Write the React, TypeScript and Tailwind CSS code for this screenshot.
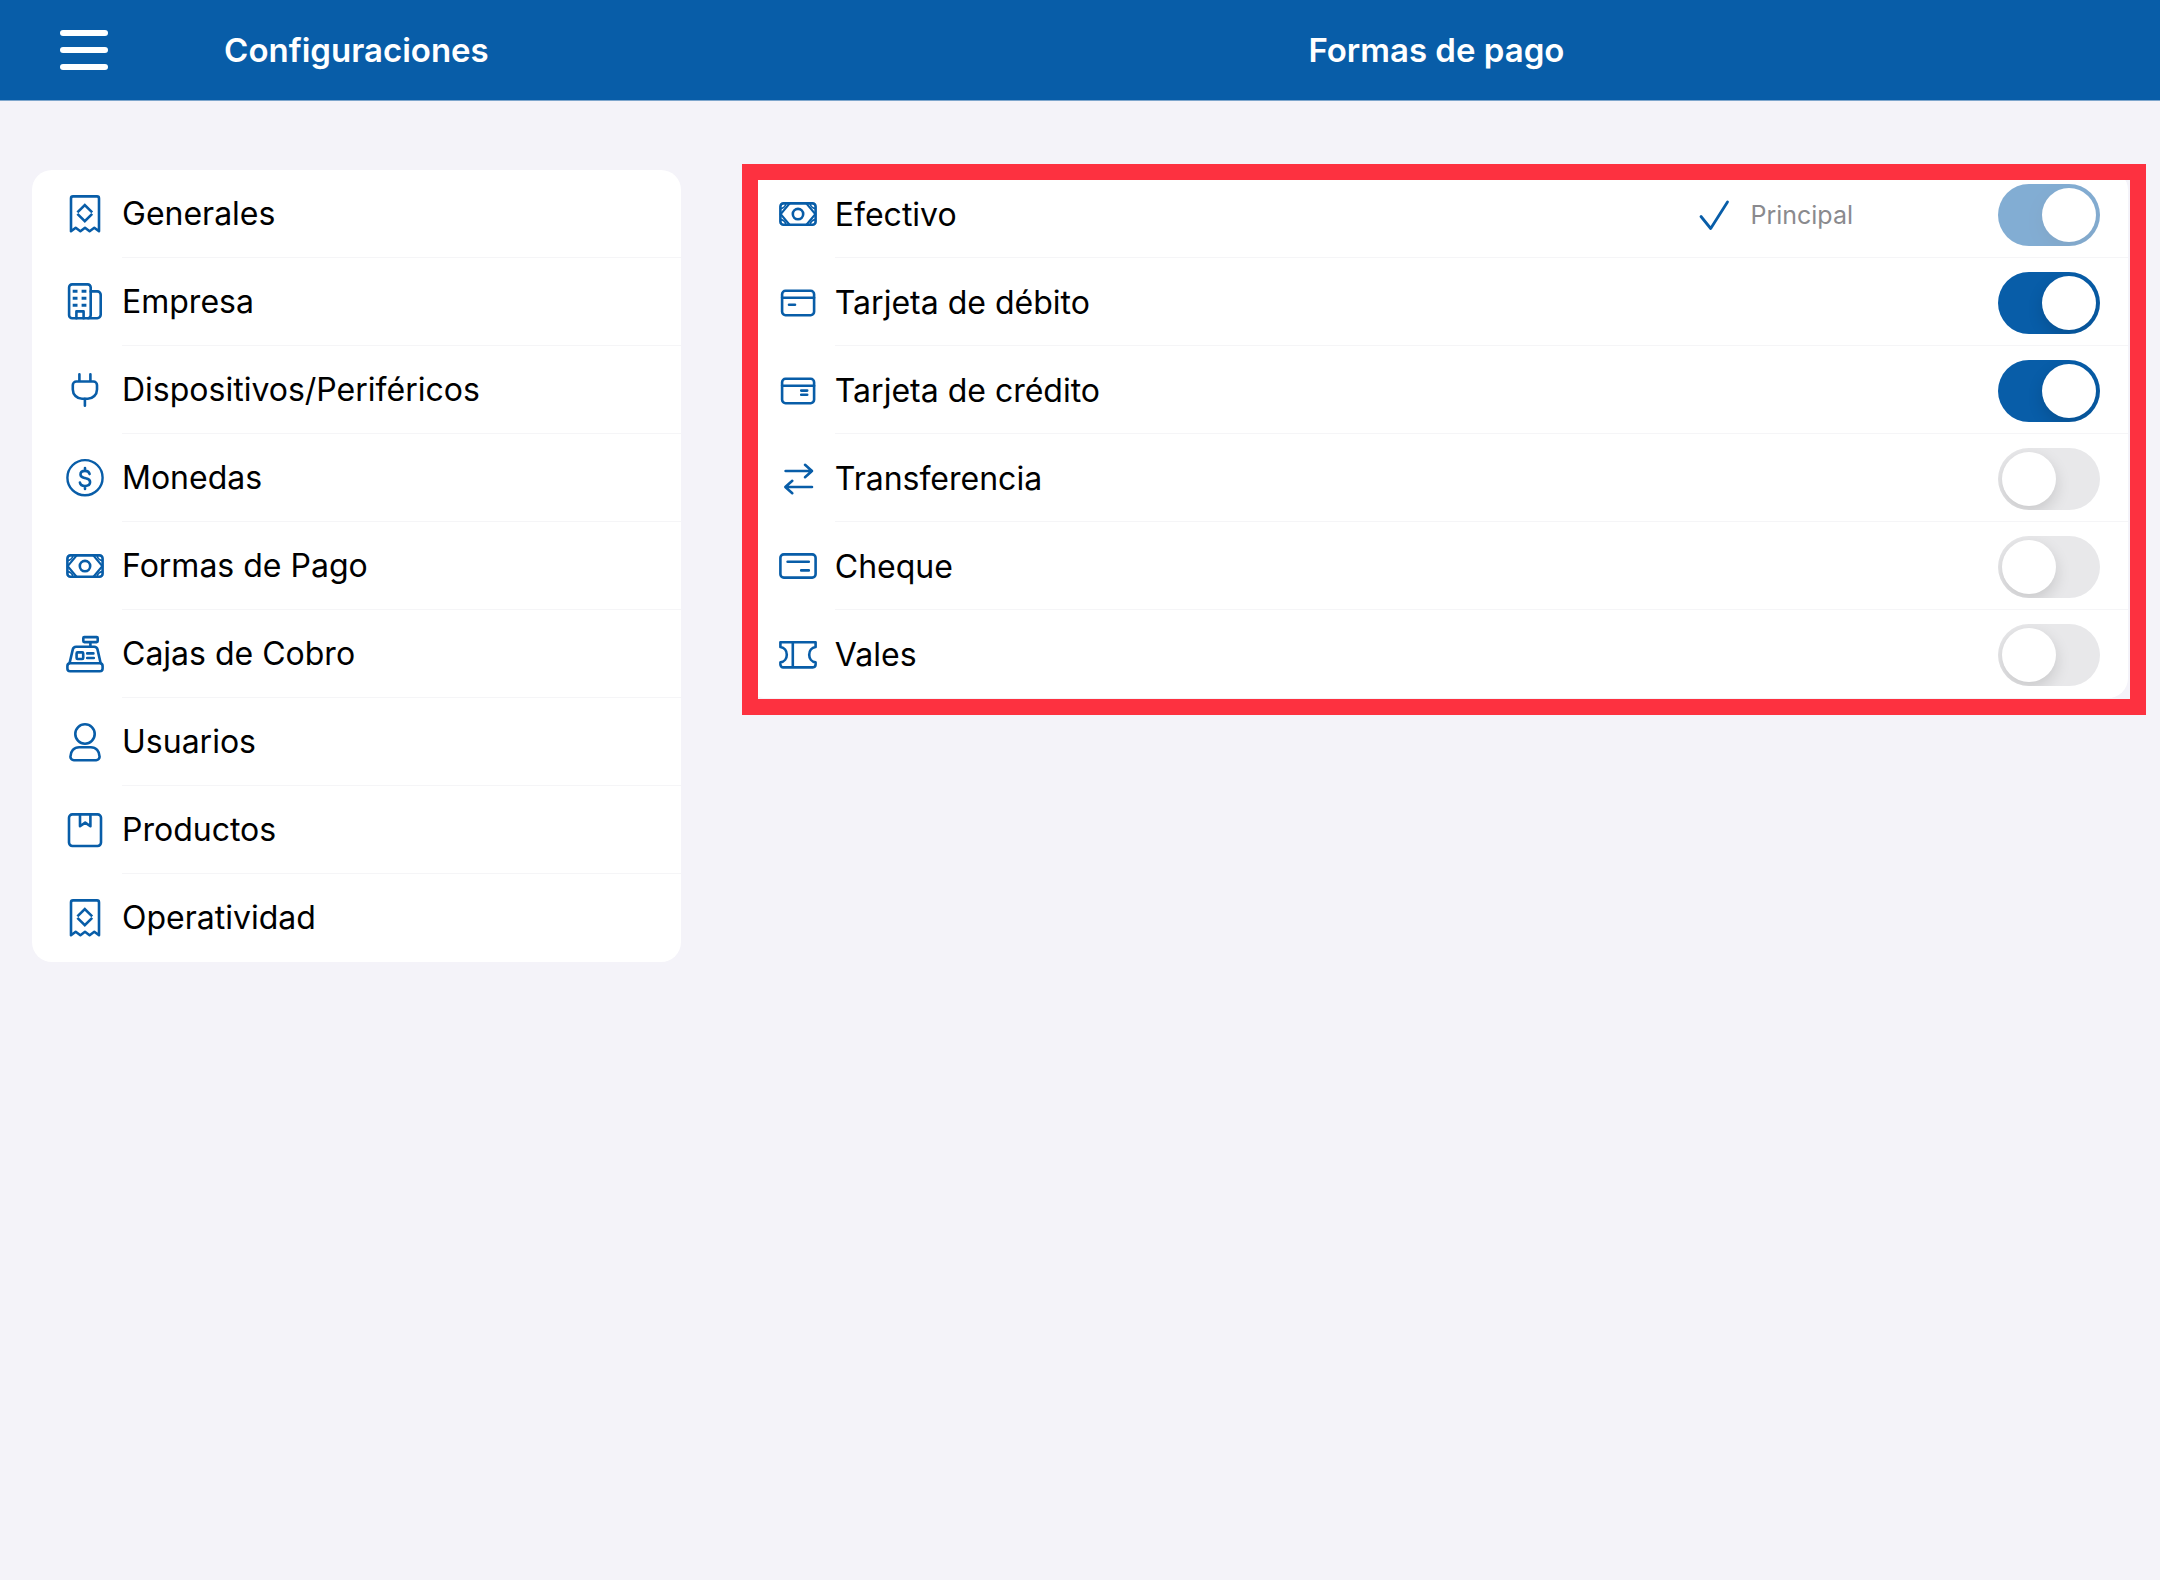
import React from "react";

function Icon({ children }: { children: React.ReactNode }) {
  return (
    <svg
      aria-hidden="true"
      viewBox="0 1 44 44"
      className="size-11 shrink-0 text-[#085da8]"
      fill="none"
      stroke="currentColor"
      strokeWidth="2.6"
      strokeLinecap="round"
      strokeLinejoin="round"
    >
      {children}
    </svg>
  );
}

const ReceiptIcon = () => (
  <Icon>
    <path d="M8 40.2V7.4a2 2 0 0 1 2-2h24a2 2 0 0 1 2 2v32.800l-4.700-3.400-4.700 3.400-4.600-3.400-4.600 3.400-4.700-3.400z" />
    <path d="M14.4 21.400l7.400-7.400 7.400 7.400M14.400 22.800l7.400 7.400 7.400-7.400" strokeLinecap="butt" strokeLinejoin="miter" />
  </Icon>
);

const BuildingIcon = () => (
  <Icon>
    <rect x="6.1" y="5.4" width="21.6" height="33.8" rx="3" />
    <path d="M27.7 12.4h6.6a3.4 3.4 0 0 1 3.4 3.4v20a3.4 3.4 0 0 1-3.4 3.4h-9M13.4 39.2v-6.8h7.2v6.8" />
    <path d="M9.7 12.2h4.8M18.6 12.2h4.8M9.7 19.2h4.8M18.6 19.2h4.8M9.7 26.3h4.8M18.6 26.3h4.8" strokeLinecap="butt" strokeWidth="3" />
  </Icon>
);

const PlugIcon = () => (
  <Icon>
    <path d="M16.4 7.2v7M27.4 7.2v7M21.9 31.6v7.2M13.4 14.5h17a3.6 3.6 0 0 1 3.6 3.6v4.4a9.2 9.2 0 0 1-9.2 9.2H19a9.2 9.2 0 0 1-9.2-9.2v-4.4a3.6 3.6 0 0 1 3.6-3.6z" />
  </Icon>
);

const CoinIcon = () => (
  <Icon>
    <circle cx="22" cy="22.7" r="17.6" strokeWidth="2.4" />
    <path d="M22 13v3M22 31v3M26.6 19.1c-.4-2-2.2-3.2-4.6-3.2-2.7 0-4.5 1.4-4.5 3.5 0 2 1.4 2.9 4 3.5l1.4.4c2.7.6 4.2 1.6 4.2 3.8 0 2.4-2.1 3.9-5.1 3.9-2.8 0-4.7-1.3-5.1-3.5" />
  </Icon>
);

const BanknoteIcon = () => (
  <Icon>
    <rect x="4.4" y="12.4" width="35.2" height="21.4" rx="3" />
    <circle cx="22" cy="23.1" r="5.2" />
    <path d="M13.5 12.6 4.7 23.1l8.8 10.6M30.5 12.6l8.8 10.5-8.8 10.6" strokeWidth="2.2" />
    <path d="M4.7 17.6c2.8-.4 4.6-2 5.2-4.9M4.7 28.6c2.8.4 4.6 2 5.2 4.9M39.3 17.6c-2.8-.4-4.6-2-5.2-4.9M39.3 28.6c-2.8.4-4.6 2-5.2 4.9" strokeWidth="1.6" />
  </Icon>
);

const RegisterIcon = () => (
  <Icon>
    <rect x="20.3" y="6.1" width="14.4" height="5" rx="1" />
    <path d="M27.4 11.2v4M6.6 32l3.2-13.6a3.4 3.4 0 0 1 3.3-2.6h18.1a3.4 3.4 0 0 1 3.3 2.6L37.6 32" />
    <rect x="4.4" y="32.2" width="35.2" height="8" rx="2.8" />
    <rect x="13.6" y="21.4" width="6.6" height="6.6" rx="1" />
    <path d="M24.2 22.4h6.2M24.2 27h6.6" />
  </Icon>
);

const UserIcon = () => (
  <Icon>
    <circle cx="22" cy="15" r="9.7" />
    <path d="M10.8 41.2h22.4a3.4 3.4 0 0 0 3.4-3.4c0-5.6-3.6-9.6-8.8-9.6H16.2c-5.2 0-8.8 4-8.8 9.6a3.4 3.4 0 0 0 3.4 3.4z" />
  </Icon>
);

const ProductIcon = () => (
  <Icon>
    <rect x="6" y="7.4" width="32" height="31.6" rx="3.4" />
    <path d="M17 7.4v11.8l5.2-3.6 5.2 3.6V7.4" />
  </Icon>
);

const DebitCardIcon = () => (
  <Icon>
    <rect x="6.1" y="11.8" width="32" height="24.4" rx="3.4" />
    <path d="M6.1 18.8h32M13 25.8h6" />
  </Icon>
);

const CreditCardIcon = () => (
  <Icon>
    <rect x="6.1" y="11.8" width="32" height="24.4" rx="3.4" />
    <path d="M6.1 18.8h32M25.2 23.6h6M25.2 27.8h6" />
  </Icon>
);

const TransferIcon = () => (
  <Icon>
    <path d="M9.6 16h26.4M29 9.8l7 6.2-7 6.2M36 32H9.6M16.3 25.8l-7 6.2 7 6.2" />
  </Icon>
);

const ChequeIcon = () => (
  <Icon>
    <rect x="4.4" y="11.4" width="35.2" height="23.2" rx="3.4" />
    <path d="M11.6 18.8h21.2M25.2 27.4h7.6" />
  </Icon>
);

const TicketIcon = () => (
  <Icon>
    <path d="M4.4 11.2h35.2v4.8c-4 .6-6.4 3.8-6.4 7.7s2.4 7.1 6.4 7.7v2.2a2.8 2.8 0 0 1-2.8 2.8H7.2a2.8 2.8 0 0 1-2.8-2.8v-2.2c4-.6 6.4-3.8 6.4-7.7s-2.4-7.1-6.4-7.7zM16.8 11.2v25.2" />
  </Icon>
);

const CheckMark = () => (
  <svg
    aria-hidden="true"
    viewBox="0 0 32 32"
    className="size-8 shrink-0 text-[#085da8]"
    fill="none"
    stroke="currentColor"
    strokeWidth="2.8"
    strokeLinecap="round"
    strokeLinejoin="round"
  >
    <path d="M3 17.5 12.7 29.5 29.5 3" />
  </svg>
);

const menu = [
  { label: "Generales", icon: ReceiptIcon },
  { label: "Empresa", icon: BuildingIcon },
  { label: "Dispositivos/Periféricos", icon: PlugIcon },
  { label: "Monedas", icon: CoinIcon },
  { label: "Formas de Pago", icon: BanknoteIcon },
  { label: "Cajas de Cobro", icon: RegisterIcon },
  { label: "Usuarios", icon: UserIcon },
  { label: "Productos", icon: ProductIcon },
  { label: "Operatividad", icon: ReceiptIcon },
];

const payments = [
  { id: "efectivo", label: "Efectivo", icon: BanknoteIcon, on: true, main: true },
  { id: "debito", label: "Tarjeta de débito", icon: DebitCardIcon, on: true },
  { id: "credito", label: "Tarjeta de crédito", icon: CreditCardIcon, on: true },
  { id: "transferencia", label: "Transferencia", icon: TransferIcon, on: false },
  { id: "cheque", label: "Cheque", icon: ChequeIcon, on: false },
  { id: "vales", label: "Vales", icon: TicketIcon, on: false },
];

function Toggle({ id, on, disabled }: { id: string; on: boolean; disabled?: boolean }) {
  return (
    <input
      id={id}
      type="checkbox"
      role="switch"
      defaultChecked={on}
      disabled={disabled}
      className="h-[62px] w-[102px] shrink-0 appearance-none overflow-hidden rounded-full bg-[#e8e8ea] p-1 before:block before:size-[54px] before:rounded-full before:bg-white before:shadow-[0_6px_16px_rgba(0,0,0,0.14)] checked:bg-[#085da8] checked:before:ml-10 disabled:opacity-50"
    />
  );
}

export default function App() {
  return (
    <div className="min-h-screen bg-[#f4f3f9] font-[Inter,'Liberation_Sans',sans-serif] text-black">
      <header className="grid h-[101px] grid-cols-[33%_1fr] border-b border-[#7ea6cd] bg-[#085da8] text-[33px] leading-[40px] font-semibold text-white">
        <div className="grid grid-cols-[1fr_auto_1fr] items-center">
          <button type="button" aria-label="Menú" className="ml-[60px] flex w-12 flex-col gap-[11px]">
            <span className="h-1.5 rounded-full bg-white" />
            <span className="h-1.5 rounded-full bg-white" />
            <span className="h-1.5 rounded-full bg-white" />
          </button>
          <h2>Configuraciones</h2>
        </div>
        <h1 className="self-center text-center">Formas de pago</h1>
      </header>

      <div className="grid grid-cols-[33%_1fr] items-start pt-[69px] text-[32px] leading-[40px]">
        <nav className="mx-8 rounded-[20px] bg-white">
          <ul>
            {menu.map(({ label, icon: Glyph }) => (
              <li key={label} className="group">
                <a href="#" className="flex h-[88px] items-center gap-[15px] pl-[31px]">
                  <Glyph />
                  <span className="flex h-full flex-1 items-center border-b border-[#f5f5f7] pt-px group-last:border-transparent">
                    {label}
                  </span>
                </a>
              </li>
            ))}
          </ul>
        </nav>

        <main className="relative mx-8 rounded-[20px] bg-white">
          <ul>
            {payments.map(({ id, label, icon: Glyph, on, main }) => (
              <li key={id} className="group flex h-[88px] items-center gap-[15px] pl-[31px]">
                <Glyph />
                <div className="flex h-full flex-1 items-center border-b border-[#f5f5f7] pt-[3px] pr-7 group-last:border-transparent">
                  <label htmlFor={id} className="flex-1">
                    {label}
                  </label>
                  {main && (
                    <span className="mr-[145px] flex items-center gap-5 text-[25px] leading-8 text-[#8a8a8e]">
                      <CheckMark />
                      Principal
                    </span>
                  )}
                  <Toggle id={id} on={on} disabled={main} />
                </div>
              </li>
            ))}
          </ul>
          <div className="pointer-events-none absolute -top-1.5 -right-[18px] -bottom-[17px] -left-[3px] border-[16px] border-[#fd3140]" />
        </main>
      </div>
    </div>
  );
}
